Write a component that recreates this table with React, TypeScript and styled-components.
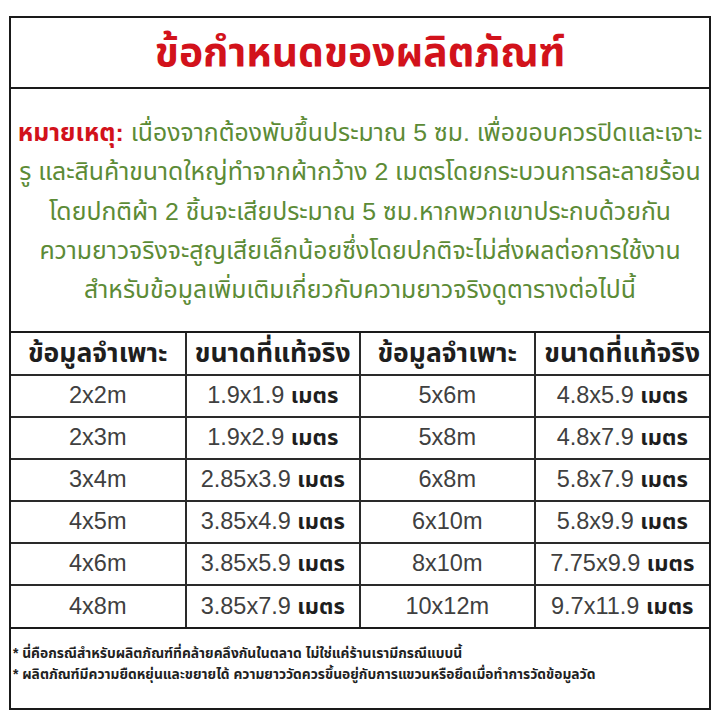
import React from "react";
import styled, { createGlobalStyle } from "styled-components";

const Global = createGlobalStyle`
  html, body { margin: 0; padding: 0; background: #ffffff; }
  body { font-family: "Liberation Sans", "Noto Sans Thai", "Noto Sans", sans-serif; }
`;

const Card = styled.div`
  box-sizing: border-box;
  width: 702px;
  margin: 16px 0 0 9px;
  border: 2px solid #1a1a1a;
  background: #fff;
`;

const TitleBar = styled.div`
  height: 69px;
  border-bottom: 2px solid #1a1a1a;
  display: flex;
  align-items: center;
  justify-content: center;
`;

const Title = styled.h1`
  margin: 0;
  color: #d2121b;
  font-size: 40.8px;
  font-weight: 700;
  line-height: 1;
`;

const Notes = styled.div`
  box-sizing: border-box;
  height: 244px;
  padding-top: 24px;
  border-bottom: 2px solid #1a1a1a;
  text-align: center;
  color: #5c8b36;
  font-size: 24.8px;
  line-height: 39.3px;
  white-space: nowrap;
`;

const NoteLabel = styled.span`
  color: #d2121b;
  font-weight: 700;
`;

const Table = styled.table`
  width: 100%;
  border-collapse: collapse;
  table-layout: fixed;
`;

const Row = styled.tr`
  height: 42px;
  & + & > * { border-top: 2px solid #2a2a2a; }
`;

const Th = styled.th`
  box-sizing: border-box;
  padding: 0;
  font-size: 26.5px;
  font-weight: 700;
  color: #1e1e1e;
  text-align: center;
  white-space: nowrap;
  line-height: 1;
  & + & { border-left: 2px solid #2a2a2a; }
`;

const Td = styled.td`
  box-sizing: border-box;
  padding: 0;
  font-size: 23.5px;
  color: #404040;
  text-align: center;
  white-space: nowrap;
  line-height: 1;
  & + & { border-left: 2px solid #2a2a2a; }
`;

const Unit = styled.span`
  font-weight: 700;
  color: #1e1e1e;
  font-size: 22px;
`;

const Footer = styled.div`
  box-sizing: border-box;
  height: 81px;
  border-top: 2px solid #1a1a1a;
  padding: 14px 0 0 2px;
  font-size: 13.8px;
  font-weight: 700;
  line-height: 21px;
  color: #222;
  white-space: nowrap;
`;

const rows: [string, string, string, string][] = [
  ["2x2m", "1.9x1.9", "5x6m", "4.8x5.9"],
  ["2x3m", "1.9x2.9", "5x8m", "4.8x7.9"],
  ["3x4m", "2.85x3.9", "6x8m", "5.8x7.9"],
  ["4x5m", "3.85x4.9", "6x10m", "5.8x9.9"],
  ["4x6m", "3.85x5.9", "8x10m", "7.75x9.9"],
  ["4x8m", "3.85x7.9", "10x12m", "9.7x11.9"],
];

export default function App() {
  return (
    <>
      <Global />
      <Card>
        <TitleBar>
          <Title>ข้อกำหนดของผลิตภัณฑ์</Title>
        </TitleBar>
        <Notes>
          <NoteLabel>หมายเหตุ:</NoteLabel> เนื่องจากต้องพับขึ้นประมาณ 5 ซม. เพื่อขอบควรปิดและเจาะ
          <br />
          รู และสินค้าขนาดใหญ่ทำจากผ้ากว้าง 2 เมตรโดยกระบวนการละลายร้อน
          <br />
          โดยปกติผ้า 2 ชิ้นจะเสียประมาณ 5 ซม.หากพวกเขาประกบด้วยกัน
          <br />
          ความยาวจริงจะสูญเสียเล็กน้อยซึ่งโดยปกติจะไม่ส่งผลต่อการใช้งาน
          <br />
          สำหรับข้อมูลเพิ่มเติมเกี่ยวกับความยาวจริงดูตารางต่อไปนี้
        </Notes>
        <Table>
          <tbody>
            <Row>
              <Th>ข้อมูลจำเพาะ</Th>
              <Th>ขนาดที่แท้จริง</Th>
              <Th>ข้อมูลจำเพาะ</Th>
              <Th>ขนาดที่แท้จริง</Th>
            </Row>
            {rows.map((r) => (
              <Row key={r[0]}>
                <Td>{r[0]}</Td>
                <Td>
                  {r[1]} <Unit>เมตร</Unit>
                </Td>
                <Td>{r[2]}</Td>
                <Td>
                  {r[3]} <Unit>เมตร</Unit>
                </Td>
              </Row>
            ))}
          </tbody>
        </Table>
        <Footer>
          * นี่คือกรณีสำหรับผลิตภัณฑ์ที่คล้ายคลึงกันในตลาด ไม่ใช่แค่ร้านเรามีกรณีแบบนี้
          <br />
          * ผลิตภัณฑ์มีความยืดหยุ่นและขยายได้ ความยาววัดควรขึ้นอยู่กับการแขวนหรือยึดเมื่อทำการวัดข้อมูลวัด
        </Footer>
      </Card>
    </>
  );
}
